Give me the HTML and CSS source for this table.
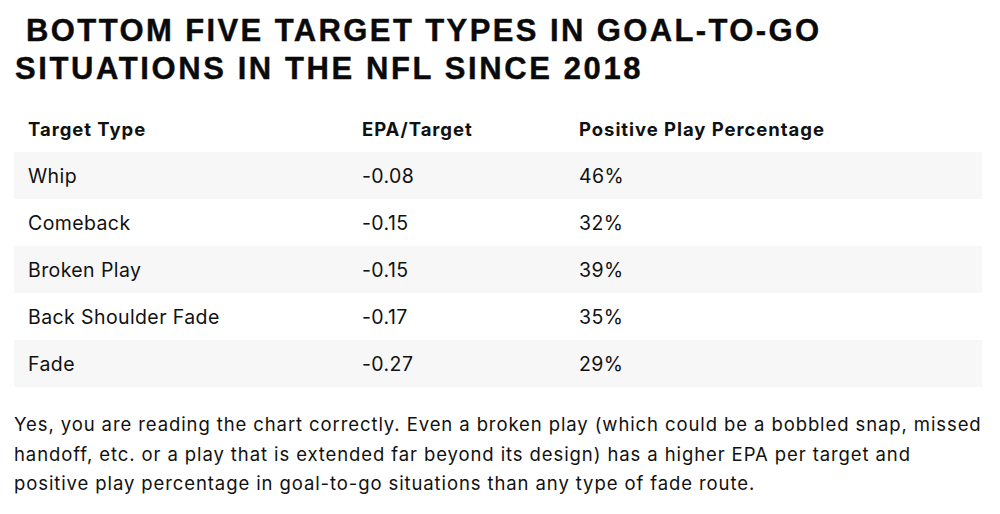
FILE: index.html
```html
<!DOCTYPE html>
<html>
<head>
<meta charset="utf-8">
<link rel="stylesheet" href="styles.css">
</head>
<body>
<main class="article">
  <h2 class="title">&nbsp;BOTTOM FIVE TARGET TYPES IN GOAL-TO-GO<br><span class="line2">SITUATIONS IN THE NFL SINCE 2018</span></h2>
  <table class="data">
    <thead>
      <tr><th class="c1">Target Type</th><th class="c2">EPA/Target</th><th class="c3">Positive Play Percentage</th></tr>
    </thead>
    <tbody>
      <tr class="odd"><td>Whip</td><td>-0.08</td><td>46%</td></tr>
      <tr><td>Comeback</td><td>-0.15</td><td>32%</td></tr>
      <tr class="odd"><td>Broken Play</td><td>-0.15</td><td>39%</td></tr>
      <tr><td>Back Shoulder Fade</td><td>-0.17</td><td>35%</td></tr>
      <tr class="odd"><td>Fade</td><td>-0.27</td><td>29%</td></tr>
    </tbody>
  </table>
  <p class="body">Yes, you are reading the chart correctly. Even a broken play (which could be a bobbled snap, missed handoff, etc. or a play that is extended far beyond its design) has a higher EPA per target and positive play percentage in goal-to-go situations than any type of fade route.</p>
</main>
</body>
</html>
```
FILE: styles.css
```css
html, body {
  margin: 0;
  padding: 0;
  background: #ffffff;
}
.article {
  padding: 12px 14px 0 14px;
  color: #111111;
  font-family: "Inter", "Liberation Sans", sans-serif;
}
.title {
  margin: 0 0 0 1px;
  font-family: "Liberation Sans", Arial, sans-serif;
  font-weight: 700;
  font-size: 31px;
  line-height: 38px;
  letter-spacing: 2.4px;
  color: #0a0a0a;
  -webkit-text-stroke: 0.4px #0a0a0a;
}
.line2 {
  letter-spacing: 2.6px;
}
.data {
  width: 968px;
  margin-top: 17px;
  border-collapse: collapse;
  font-size: 19.5px;
  letter-spacing: 0.4px;
}
.data th, .data td {
  text-align: left;
  padding: 0 14px;
  height: 47px;
}
.data th {
  font-weight: 700;
  font-size: 18.5px;
  letter-spacing: 0.95px;
}
.c1 { width: 306px; }
.c2 { width: 189px; }
.data tr.odd td {
  background: #f7f7f7;
}
.body {
  margin: 23px 0 0 0;
  font-size: 18.5px;
  line-height: 29.5px;
  letter-spacing: 0.9px;
  color: #111111;
}
```
